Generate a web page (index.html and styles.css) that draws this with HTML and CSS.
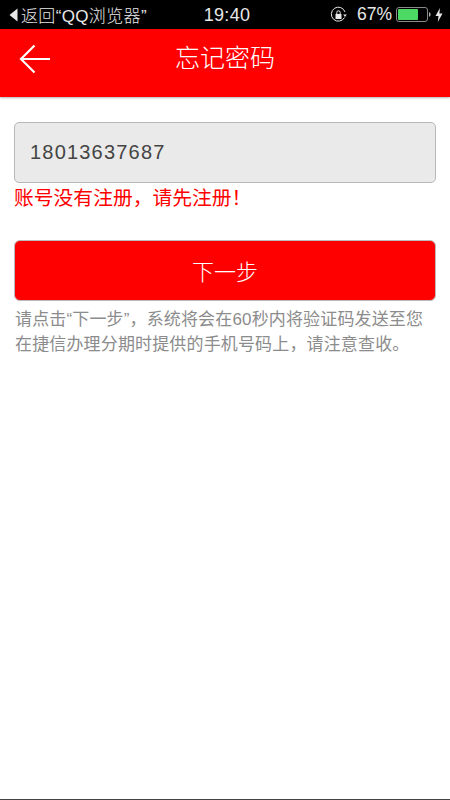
FILE: index.html
```html
<!DOCTYPE html>
<html lang="zh">
<head>
<meta charset="utf-8">
<title>忘记密码</title>
<link rel="stylesheet" href="styles.css">
</head>
<body>
<div class="page">
  <div class="statusbar">
    <div class="status-left">
      <svg class="back-tri" width="9" height="14" viewBox="0 0 9 14"><path d="M8.5 0.5V13.5L0.5 7Z" fill="#e8e8e8"/></svg>
      <span>返回“QQ浏览器”</span>
    </div>
    <div class="status-time">19:40</div>
    <div class="status-right">
      <svg class="lock" width="18" height="18" viewBox="0 0 18 18"><path d="M14.5 11.5A7 7 0 1 1 15 6" fill="none" stroke="#e8e8e8" stroke-width="1"/><path d="M13.2 8.5h3.6L15 11Z" fill="#e8e8e8"/><rect x="5.5" y="8" width="6" height="5" rx="0.6" fill="#e8e8e8"/><path d="M6.8 8V6.5a1.7 1.7 0 0 1 3.4 0V8" fill="none" stroke="#e8e8e8" stroke-width="1"/></svg>
      <span class="pct">67%</span>
      <svg class="battery" width="35" height="15" viewBox="0 0 35 15"><rect x="0.5" y="0.5" width="31" height="14" rx="2.5" fill="none" stroke="#8a8a8a"/><rect x="2" y="2" width="20" height="11" rx="1" fill="#4cd964"/><path d="M33 5.2c1 .3 1.6 1.2 1.6 2.3s-.6 2-1.6 2.3Z" fill="#b0b0b0"/></svg>
      <svg class="bolt" width="8" height="14" viewBox="0 0 8 14"><path d="M5 0 0.5 8H3.5L2.8 14 7.5 5.5H4.4Z" fill="#e8e8e8"/></svg>
    </div>
  </div>
  <header class="navbar">
    <svg class="nav-back" width="32" height="30" viewBox="0 0 32 30"><path d="M31 15H2M15.5 1.5 2 15 15.5 28.5" fill="none" stroke="#fff" stroke-width="2.2"/></svg>
    <h1 class="nav-title">忘记密码</h1>
  </header>
  <main class="content">
    <div class="field">18013637687</div>
    <p class="error">账号没有注册，请先注册！</p>
    <button class="next" type="button">下一步</button>
    <p class="hint">请点击“下一步”，系统将会在60秒内将验证码发送至您在捷信办理分期时提供的手机号码上，请注意查收。</p>
  </main>
  <div class="edge"></div>
</div>
</body>
</html>
```
FILE: styles.css
```css
* { box-sizing: border-box; }
html, body { margin: 0; padding: 0; }
body { font-family: "Liberation Sans", "Noto Sans CJK SC", sans-serif; background: #fff; }
.page { width: 450px; height: 800px; display: flex; flex-direction: column; overflow: hidden; }
.statusbar { height: 29px; background: #000; color: #e8e8e8; display: grid; grid-template-columns: 1fr auto 1fr; align-items: center; font-size: 17px; }
.status-left { display: flex; align-items: center; padding-left: 9px; gap: 3px; font-size: 17px; letter-spacing: 0.35px; white-space: nowrap; font-weight: 300; }
.status-time { font-size: 18px; letter-spacing: 0.3px; padding: 1px 0 0 4px; }
.status-right { display: flex; align-items: center; justify-content: flex-end; padding-right: 7px; }
.lock { margin-right: 9px; }
.pct { margin-right: 4px; font-size: 17.5px; }
.battery { margin-right: 4px; }
.navbar { height: 68px; background: #f00; display: flex; align-items: center; justify-content: center; position: relative; padding-bottom: 9px; box-shadow: 0 1px 2px rgba(0,0,0,.3); }
.nav-back { position: absolute; left: 19px; top: 15px; }
.nav-title { margin: 0; color: #fff; font-size: 25px; font-weight: 300; line-height: 1; }
.content { flex: 1; padding: 25px 14px 0; }
.field { height: 61px; background: #eaeaea; border: 1px solid #b8b8b8; border-radius: 5px; padding-left: 15px; display: flex; align-items: center; font-size: 20px; letter-spacing: 1.2px; color: #444; }
.error { margin: 1px 0 0; color: #f00; font-size: 19.8px; line-height: 28px; }
.next { display: block; width: 100%; height: 61px; margin-top: 28px; background: #f00; border: 1px solid #bbb; border-radius: 6px; color: #fff; font-family: inherit; font-size: 22px; font-weight: 300; padding: 0 0 2px; }
.hint { margin: 6px 0 0; padding-left: 1px; color: #8c8c8c; font-size: 17px; letter-spacing: 0.15px; line-height: 25px; }
.edge { height: 1px; background: #444; }
```
